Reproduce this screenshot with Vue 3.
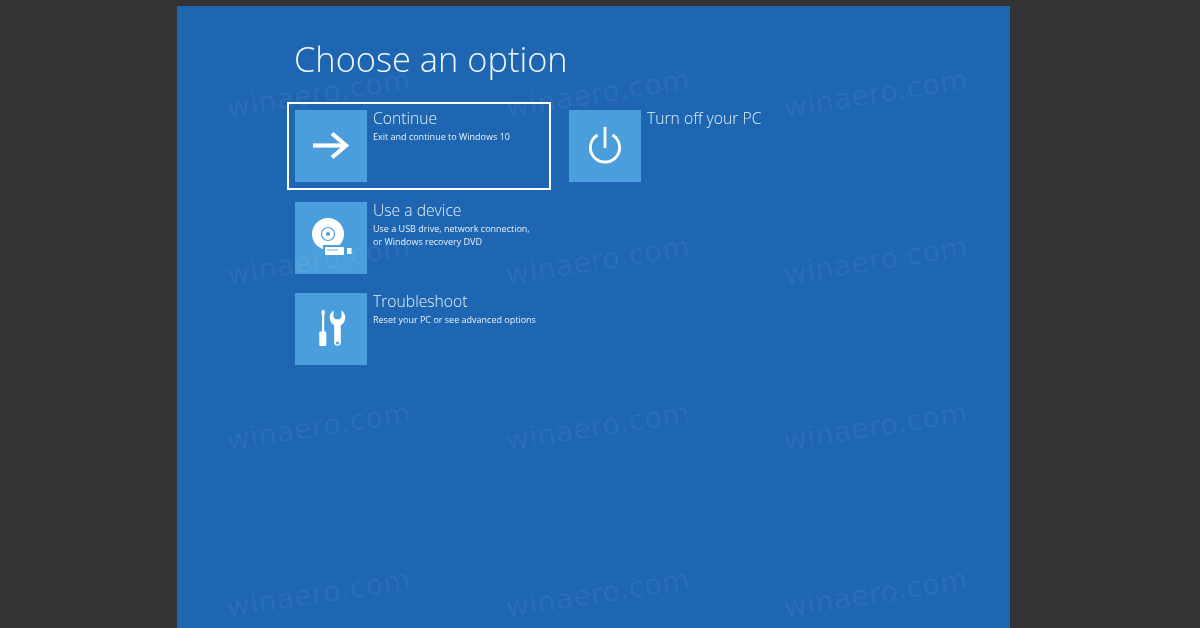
<script setup>
const leftOptions = [
  { id: 'continue', title: 'Continue', lines: ['Exit and continue to Windows 10'], icon: 'arrow', focused: true },
  { id: 'device', title: 'Use a device', lines: ['Use a USB drive, network connection,', 'or Windows recovery DVD'], icon: 'disc' },
  { id: 'trouble', title: 'Troubleshoot', lines: ['Reset your PC or see advanced options'], icon: 'tools' }
]
const rightOptions = [{ id: 'off', title: 'Turn off your PC', lines: [], icon: 'power' }]
const columns = [leftOptions, rightOptions]
const marks = Array.from({ length: 12 }, (_, i) => i)
</script>

<template>
  <div class="page">
    <main class="panel">
      <div class="content">
        <h1 class="heading">Choose an option</h1>
        <div class="columns">
          <div v-for="(col, c) in columns" :key="c" class="column">
            <div v-for="o in col" :key="o.id" class="option" :class="{ focused: o.focused }">
              <div class="tile">
                <svg v-if="o.icon === 'arrow'" width="72" height="72" viewBox="0 0 72 72" fill="none" stroke="#fff" stroke-width="4.2">
                  <path d="M18 35.500H50" />
                  <path d="M37 23.500L51 35.500L37 47.500" />
                </svg>
                <svg v-else-if="o.icon === 'disc'" width="72" height="72" viewBox="0 0 72 72">
                  <circle cx="33" cy="32" r="16" fill="#fff" />
                  <circle cx="33" cy="32" r="6.500" fill="none" stroke="#4a9edb" stroke-width="1.200" />
                  <circle cx="33" cy="32" r="2" fill="#4a9edb" />
                  <rect x="28" y="43" width="23" height="12" fill="#4a9edb" />
                  <rect x="30" y="45" width="19" height="8" rx="1" fill="#fff" />
                  <rect x="32" y="47" width="11" height="1.600" fill="#a9d2ee" />
                  <rect x="52" y="46" width="4.500" height="6" fill="#fff" />
                </svg>
                <svg v-else-if="o.icon === 'tools'" width="72" height="72" viewBox="0 0 72 72" fill="#fff">
                  <rect x="27" y="17" width="2.200" height="22" />
                  <rect x="26.500" y="17" width="3.200" height="5" rx="1.500" />
                  <rect x="24.300" y="38.500" width="7" height="14.500" rx="1.200" />
                  <path fill-rule="evenodd" d="M38.500 17.500v6.800l2 2h4l2-2v-6.800c2.400 1.500 3.700 4 3.700 7c0 3.500-1.800 6.300-4.400 7.700v17.300a3.300 3.300 0 0 1-6.600 0v-17.300c-2.600-1.400-4.400-4.200-4.400-7.700c0-3 1.300-5.500 3.700-7ZM42.500 48.500a1.500 1.500 0 1 0 0 3a1.500 1.500 0 0 0 0-3Z" />
                </svg>
                <svg v-else width="72" height="72" viewBox="0 0 72 72" fill="none" stroke="#fff" stroke-width="2.800">
                  <path d="M36 17V38" />
                  <path d="M28.500 25a14.600 14.600 0 1 0 15 0" />
                </svg>
              </div>
              <div class="text">
                <div class="title">{{ o.title }}</div>
                <div class="desc">
                  <div v-for="l in o.lines" :key="l">{{ l }}</div>
                </div>
              </div>
            </div>
          </div>
        </div>
      </div>
      <div class="marks" aria-hidden="true">
        <span v-for="m in marks" :key="m" class="mark">winaero.com</span>
      </div>
    </main>
  </div>
</template>

<style>
html, body { margin: 0; background: #333333; }
</style>

<style scoped>
.page {
  width: 1200px;
  height: 628px;
  overflow: hidden;
  background: #333333;
  padding: 6px 190px 0 177px;
  box-sizing: border-box;
}
.panel {
  position: relative;
  height: 100%;
  background: #1e66b2;
  overflow: hidden;
  font-family: "Open Sans", "Liberation Sans", sans-serif;
  color: #fff;
}
.content {
  padding: 32px 0 0 117px;
  filter: blur(0.5px);
}
.heading {
  margin: 0 0 30px;
  font-size: 34.400px;
  line-height: 42px;
  font-weight: 300;
  color: #eef6fc;
  white-space: nowrap;
}
.columns {
  display: flex;
  gap: 26px;
  padding-left: 1px;
}
.column {
  display: flex;
  flex-direction: column;
  gap: 19.500px;
}
.option {
  display: flex;
  width: 248px;
  height: 72px;
  gap: 6px;
}
.option.focused {
  outline: 2px solid #fff;
  outline-offset: 6px;
}
.tile {
  flex: none;
  width: 72px;
  height: 72px;
  background: #4a9edb;
}
.tile svg { display: block; }
.text { min-width: 0; margin-top: -3px; white-space: nowrap; }
.title {
  font-size: 15.700px;
  line-height: 22px;
  font-weight: 300;
  color: #e4f0fa;
}
.desc {
  margin-top: 1px;
  font-size: 9px;
  line-height: 13px;
  color: #e8f2fb;
}
.marks {
  position: absolute;
  inset: 0;
  display: grid;
  grid-template-columns: repeat(3, 278.500px);
  grid-auto-rows: 166.500px;
  padding: 5px 0 0 49px;
  pointer-events: none;
}
.mark {
  justify-self: start;
  align-self: start;
  margin-top: 67px;
  font-family: "DejaVu Sans", sans-serif;
  font-size: 28px;
  line-height: 32px;
  letter-spacing: 0.600px;
  color: rgba(255, 255, 255, 0.06);
  transform: rotate(-9deg);
  transform-origin: center;
  white-space: nowrap;
}
</style>
